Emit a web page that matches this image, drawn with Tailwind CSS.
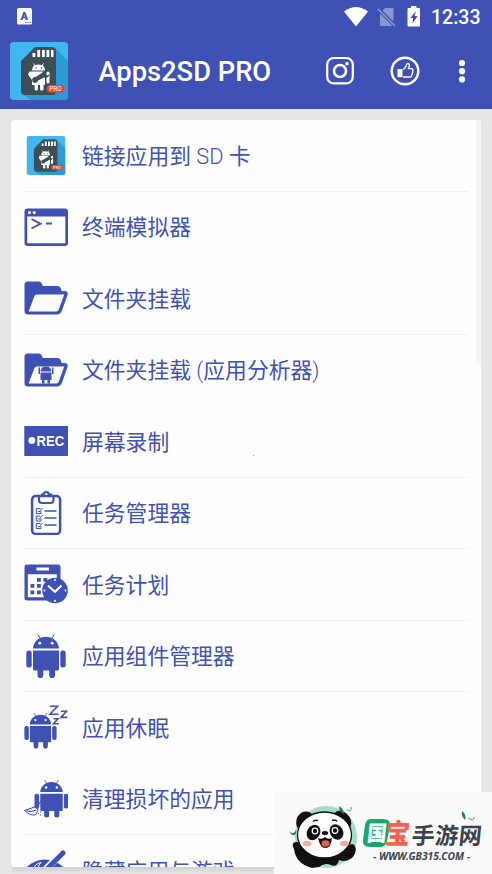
<!DOCTYPE html>
<html lang="zh-CN">
<head>
<meta charset="utf-8">
<title>Apps2SD PRO</title>
<script src="https://cdn.jsdelivr.net/npm/@tailwindcss/browser@4"></script>
</head>
<body class="w-[492px] h-[874px] overflow-hidden bg-[#e6e6e6] font-['Roboto','Noto_Sans_CJK_SC',sans-serif]">
<svg class="hidden">
  <symbol id="droid" viewBox="0 0 44 44">
    <path d="M9 14.600C9.300 8 14.500 2.800 22 2.800S34.700 8 35 14.600Z M9 16.500H35V35Q35 36.500 33.500 36.500H31V41.300a2.900 2.900 0 0 1-5.800 0V36.500H19.300V41.300a2.900 2.900 0 0 1-5.800 0V36.500H10.500Q9 36.500 9 35Z"/>
    <rect x="2.300" y="16.500" width="5.400" height="17" rx="2.300"/><rect x="36.300" y="16.500" width="5.400" height="17" rx="2.300"/>
    <path d="M16 4 13.800 0.500M28 4 30.200 0.500" stroke="currentColor" stroke-width="1"/>
    <circle cx="15.800" cy="9.200" r="1.400" fill="#fff"/><circle cx="28.200" cy="9.200" r="1.400" fill="#fff"/>
  </symbol>
  <symbol id="folder" viewBox="0 0 44 44">
    <path d="M.5 9Q.5 5.500 4 5.500H14.500Q18 5.500 18.500 10H33Q37 10 37.500 15H41Q44.500 15.500 43.500 19L38 34.500Q36.500 38.500 33 38.500H4Q.5 38.500 .5 35Z"/>
    <path d="M13 18.500H40.300L34.600 34Q34 35.400 32.500 35.400H4.600L10.500 20Q11 18.500 13 18.500Z" fill="#fdfdfd"/>
  </symbol>
  <symbol id="app" viewBox="0 0 58 58">
    <rect width="58" height="58" rx="4" fill="#42b6f0"/>
    <path d="M46 7 58 19V54Q58 58 54 58H20L12 51Z" fill="#2b9bd2"/>
    <path d="M25 5H42Q46 5 46 9V49Q46 53 42 53H15Q11 53 11 49V19Z" fill="#3c4f57"/>
    <path d="M22.500 11h2.800v4h-2.800zM27.300 8h2.800v7h-2.800zM32 8h2.800v7H32zM36.500 8h2.800v7h-2.800zM41 8h2.500v7H41z" fill="#fff"/>
    <path d="M22 28.500Q22 22.500 28.500 22.500T35 28.500ZM22 29.500H35V43H33.500V47a1.700 1.700 0 0 1-3.400 0V43H28V47a1.700 1.700 0 0 1-3.400 0V43H22V38L18 32.500L19.500 29.500H21Z" fill="#fff"/>
    <path d="M25 24 23.500 21.500M32 24 33.500 21.500" stroke="#fff"/>
    <path d="M38 31V40" stroke="#fff" stroke-width="3" stroke-linecap="round"/>
    <path d="M22.500 39.500a3 3 0 0 1 3-4.500L32 31a4 4 0 0 1 5-2l-2 2.500 2 2 2.500-1a4 4 0 0 1-5.500 3L28 38.500a3 3 0 0 1-5.500 1Z" fill="#3c4f57"/>
    <circle cx="26" cy="26" r=".8" fill="#3c4f57"/><circle cx="31.500" cy="26" r=".8" fill="#3c4f57"/>
    <rect x="36.500" y="43" width="18" height="7.600" rx="3.800" fill="#ee4237"/>
    <text x="45.500" y="49.200" text-anchor="middle" font-size="6.400" font-family="Roboto" fill="#fff">PRO</text>
  </symbol>
</svg>

<div class="relative flex flex-col h-[874px]">
  <header class="h-[109px] bg-[#3f51b5] text-white shrink-0">
    <div class="h-[33px] flex items-center pl-[17px] pr-[10px]">
      <svg class="w-[15px] h-[17px]" viewBox="0 0 15 17"><rect width="15" height="16.500" rx="1.500" fill="#fff"/><text x="7.300" y="12" text-anchor="middle" font-size="11" font-weight="900" font-family="Roboto" fill="#3f51b5">A</text><path d="M8 14.400h6" stroke="#3f51b5" stroke-dasharray="1.300 1"/></svg>
      <svg class="w-[26px] h-[20px] ml-auto" viewBox="0 0 26 20"><path d="M1 4.500Q13-4.500 25 4.500L13 19.500Z" fill="#fff"/></svg>
      <svg class="w-[19px] h-[20px] ml-[8px]" viewBox="0 0 19 20"><path d="M8 1H15.500Q16.500 1 16.500 2V14.500L5.500 3.500ZM3 6.500 15.500 19H4Q3 19 3 18Z" fill="#8c96d3"/><path d="M1 2 18 19" stroke="#8c96d3" stroke-width="1.600"/></svg>
      <svg class="w-[14px] h-[21px] ml-[11px]" viewBox="0 0 14 21"><path d="M4 0H9.500V2H12Q13 2 13 3V19.500Q13 20.500 12 20.500H1.500Q.5 20.500 .5 19.500V3Q.5 2 1.500 2H4Z" fill="#fff"/><path d="M9 5 3.300 12H6.200L5.500 17.500 10.600 10H7.600Z" fill="#3f51b5"/></svg>
      <span class="ml-[10px] w-[51px] text-[19.500px] leading-[24px] font-medium whitespace-nowrap pt-[2px]">12:33</span>
    </div>
    <div class="h-[76px] flex items-center pl-[9.500px] pb-px">
      <svg class="w-[58px] h-[58px]"><use href="#app"/></svg>
      <h1 class="ml-[31px] w-[226px] text-[27.300px] leading-[32px] font-medium whitespace-nowrap pt-[3px]">Apps2SD PRO</h1>
      <svg class="w-[30px] h-[30px]" viewBox="0 0 30 30" fill="none" stroke="#fff"><rect x="2.200" y="2" width="25.600" height="25.400" rx="6.500" stroke-width="2.200"/><circle cx="15" cy="15" r="6" stroke-width="2.600"/><circle cx="22" cy="7.700" r="1.800" fill="#fff" stroke="none"/></svg>
      <svg class="w-[30px] h-[30px] ml-[35px]" viewBox="0 0 30 30"><circle cx="15" cy="15" r="13.300" fill="none" stroke="#fff" stroke-width="2.500"/><path d="M7.500 13h5v8.200h-5z" fill="#fff"/><path d="M13 13.500Q16 12 16.500 8.500Q17.500 6.800 19 8Q20 9.500 18.500 12.600H21.800Q23.400 13.300 22.700 15Q23.200 16.300 22.300 17.200Q22.700 18.500 21.600 19.300Q21.400 21 20 21H13" fill="none" stroke="#fff" stroke-width="1.300"/></svg>
      <svg class="w-[8px] h-[24px] ml-[38px]" viewBox="0 0 8 24" fill="#fff"><circle cx="4" cy="4" r="3.100"/><circle cx="4" cy="12.200" r="3.100"/><circle cx="4" cy="20.400" r="3.100"/></svg>
    </div>
  </header>

  <main class="relative mt-[11px] ml-[11px] w-[470px] h-[747px] rounded-[4px] overflow-hidden bg-[#fefefe] text-[#3f51b5] text-[21.800px] shrink-0">
    <ul class="px-[13px] [&>li]:h-[71.500px] [&>li]:flex [&>li]:items-center [&>li]:gap-[14px] [&>li]:border-b [&>li]:border-[#f1f1f1] [&>li]:whitespace-nowrap [&_svg]:w-[44px] [&_svg]:h-[44px] [&_svg]:shrink-0 [&_svg]:fill-current [&_span]:pt-[4px] [&_i]:not-italic [&_i]:font-light">
      <li><svg viewBox="0 0 44 44"><use href="#app" x="2.500" y="3" width="39" height="39"/></svg><span>链接应用到<i> SD </i>卡</span></li>
      <li class="border-transparent!"><svg viewBox="0 0 44 44"><path fill-rule="evenodd" d="M3.500 3.500H41Q44 3.500 44 6.500V38Q44 41 41 41H3.500Q.5 41 .5 38V6.500Q.5 3.500 3.500 3.500ZM3.200 11.500V38.300H41.300V11.500Z"/><circle cx="5.500" cy="7.600" r="1.600" fill="#fff"/><circle cx="10.200" cy="7.600" r="1.600" fill="#fff"/><path d="M7.500 14 16.500 18.800 7.500 23.500M22 18.500H28" fill="none" stroke="currentColor" stroke-width="1.900"/></svg><span>终端模拟器</span></li>
      <li><svg><use href="#folder"/></svg><span>文件夹挂载</span></li>
      <li class="border-transparent!"><svg viewBox="0 0 44 44"><use href="#folder"/><path d="M16.500 23.500Q17 18.500 22 18.500T27.500 23.500ZM16.500 24.500H27.500V32H26V35.500H23.500V32H20.500V35.500H18V32H16.500ZM14.500 19.500H16V26H14.500ZM28 19.500H29.500V26H28Z"/></svg><span>文件夹挂载<i> (</i>应用分析器<i>)</i></span></li>
      <li><svg viewBox="0 0 44 44"><path d="M.3 7H44V37H.3Z"/><circle cx="7.800" cy="21.500" r="3.400" fill="#fff"/><text x="12.600" y="26.500" font-size="15.500" font-weight="700" font-family="Liberation Sans" fill="#fff" textLength="27.500" lengthAdjust="spacingAndGlyphs">REC</text></svg><span>屏幕录制</span></li>
      <li><svg viewBox="0 0 44 44" fill="none"><g fill="none" stroke="currentColor"><rect x="8.100" y="5" width="28" height="38" rx="3.500" stroke-width="2.500"/><path d="M15 4.500V9Q15 12 18 12H26.500Q29.500 12 29.500 9V4.500" stroke-width="2.200"/><path d="M15 5H18V3.500H19.500Q20 1 22.300 1T25 3.500H27V5H29.500" stroke-width="2.200"/><path d="M20.500 20H32.500M20.500 27H32.500M20.500 34H32.500" stroke-width="1.400"/><path d="M16.500 17.500H12.300V22.500H17V20M16.500 25H12.300V30H17V27.500M16.500 32.500H12.300V37.500H17V35M13.500 19.500l1.500 1.500 3.500-4M13.500 27l1.500 1.500 3.500-4M13.500 34.500l1.500 1.500 3.500-4" stroke-width="1"/></g></svg><span>任务管理器</span></li>
      <li><svg viewBox="0 0 44 44"><path fill-rule="evenodd" d="M3 2.500H34Q36.500 2.500 36.500 5V38.500H3Q.5 38.500 .5 36V5Q.5 2.500 3 2.500ZM3.800 12.200V35.200H32.800V12.200ZM12.500 5.500V8.500H25V5.500Z"/><path d="M13 16h3.800v3.800H13zM19.500 16h3.800v3.800h-3.800zM6.500 22h3.800v3.800H6.500zM13 22h3.800v3.800H13zM6.500 28.500h3.800v3.800H6.500zM13 28.500h3.800v3.800H13z"/><circle cx="31" cy="28.500" r="12.800"/><circle cx="31" cy="18" r="1" fill="#fff"/><circle cx="31" cy="38.800" r="1.100" fill="#fff"/><circle cx="20.500" cy="28.500" r="1" fill="#fff"/><circle cx="41.500" cy="28.500" r="1" fill="#fff"/><path d="M24 23.800 31 29.800 37.500 23.500" fill="none" stroke="#fff" stroke-width="2"/></svg><span>任务计划</span></li>
      <li><svg><use href="#droid"/></svg><span>应用组件管理器</span></li>
      <li class="border-transparent!"><svg viewBox="0 0 44 44"><use href="#droid" x="-1.500" y="7" width="36" height="37"/><path d="M28 18.500V13.500H36V20H29Z" fill="#fefefe"/><path d="M26 1.200H33.500L26 9.200H34.500M37 6.200H42.500L37 12.400H43.200M29.500 13.800H34L29.500 18.800H34.800" fill="none" stroke="currentColor" stroke-width="1.600"/></svg><span>应用休眠</span></li>
      <li><svg viewBox="0 0 44 44"><use href="#droid" x="8.500" y="2.500" width="38" height="38"/><path d="M.8 33.500Q7 31.500 11 29.800L14 32Q13 37 11 38Q5 38.500 .8 33.500ZM3 34Q8 35 12 33M12.500 30.500 17 24" fill="none" stroke="currentColor" stroke-width="1.100"/><path d="M14 36h1v1h-1zM16 34.500h1v1h-1zM16 37.500h1v1h-1z"/></svg><span>清理损坏的应用</span></li>
      <li><svg viewBox="0 0 44 44"><path d="M2 20Q10 11.500 21 11.500Q32 11.500 40 20Q32 29 21 29T2 20Z"/><path d="M39 4 15 28" stroke="#fdfdfd" stroke-width="7" stroke-linecap="round"/><path d="M39 5 13 31" stroke="currentColor" stroke-width="5" stroke-linecap="round"/><path d="M10 20Q11 16 17 14.500Q13.500 17 15 21" fill="none" stroke="#fff" stroke-width="1"/></svg><span>隐藏应用与游戏</span></li>
    </ul>
    <div class="absolute right-0 top-0 w-[5px] h-[244px] bg-[#f5f5f5]"></div>
    <div class="absolute left-[242px] top-[335px] w-px h-px bg-[#c76a6a]"></div>
  </main>
  <div class="h-[7px] ml-[12px] w-[468px] bg-linear-to-b from-[#d0d0d0] to-[#e6e6e6] shrink-0"></div>

  <aside class="absolute left-[274px] top-[792px] w-[218px] h-[82px] bg-[#fafafa] flex items-center">
    <svg class="w-[218px] h-[82px]" viewBox="0 0 218 82">
      <circle cx="52" cy="45" r="31" fill="#a4dec5"/>
      <path d="M20 57Q16 49 24 50L32 58L70 59Q72 52 79 52Q85 56 79 65Q72 71 65 68Q63 76 57 73Q51 70 45 75L38 76Q22 72 20 57Z" fill="#111"/>
      <path d="M23 36Q20 26 27 21Q34 17 40 24ZM60 22Q64 16 72 21Q80 28 76 36Z" fill="#111"/>
      <ellipse cx="50.500" cy="43" rx="27" ry="23" fill="#fff" stroke="#111" stroke-width="1.300"/>
      <ellipse cx="39.500" cy="40.500" rx="6.500" ry="8" transform="rotate(30 39.500 40.500)" fill="#111"/><ellipse cx="62.500" cy="40" rx="6.500" ry="8" transform="rotate(-30 62.500 40)" fill="#111"/>
      <g fill="#111" stroke="#fff" stroke-width="1.200"><circle cx="41" cy="39" r="2.800"/><circle cx="61" cy="38.500" r="2.800"/></g>
      <path d="M39 29.500Q41 27.500 44 28.500M58 28.500Q61 27 63 29.500" stroke="#111" stroke-width="1.500" fill="none"/>
      <ellipse cx="51" cy="41" rx="3.200" ry="2" fill="#111"/>
      <path d="M44 46Q48 48 51 45Q54 48 58 46Q57 56 51.500 56T44 46Z" fill="#111"/><ellipse cx="51.500" cy="51.500" rx="4" ry="3.200" fill="#f0604f"/>
      <ellipse cx="33" cy="51.500" rx="4.500" ry="2.700" fill="#f8aaa0"/><ellipse cx="70.500" cy="51.500" rx="4.500" ry="2.700" fill="#f8aaa0"/>
      <path d="M65 14Q70 17 70 22Q65 20 65 14ZM15 39Q20 44 22 38Q23 44 18 43ZM188 19Q193 23 191 28Q187 24 188 19Z" fill="#277957"/>
      <path d="M73 18Q78 21 77 15M194 26Q200 30 200 25" stroke="#69847a" fill="none"/>
      <path d="M97 27H109Q117 27 116 34L113 49Q112 55 105 55H96Q88 55 89 48L91 33Q92 27 97 27Z" fill="#18a86c"/>
      <g font-family="'Noto Sans CJK SC',sans-serif" font-weight="900">
        <text transform="translate(92.500 48.500) skewX(-6) scale(.9 1)" font-size="21.500" fill="#fff">国</text>
        <text transform="translate(110.500 51.500) skewX(-4) scale(.89 1)" font-size="28" fill="#fa604f">宝</text>
        <text transform="translate(137 52) skewX(-6)" font-size="23" font-weight="700" fill="#39424e" textLength="70">手游网</text>
      </g>
      <text x="99" y="68" font-family="'Noto Sans',sans-serif" font-size="10.500" font-weight="700" font-style="italic" fill="#39424e" textLength="97" lengthAdjust="spacingAndGlyphs">- WWW.GB315.COM -</text>
    </svg>
  </aside>
</div>
</body>
</html>
